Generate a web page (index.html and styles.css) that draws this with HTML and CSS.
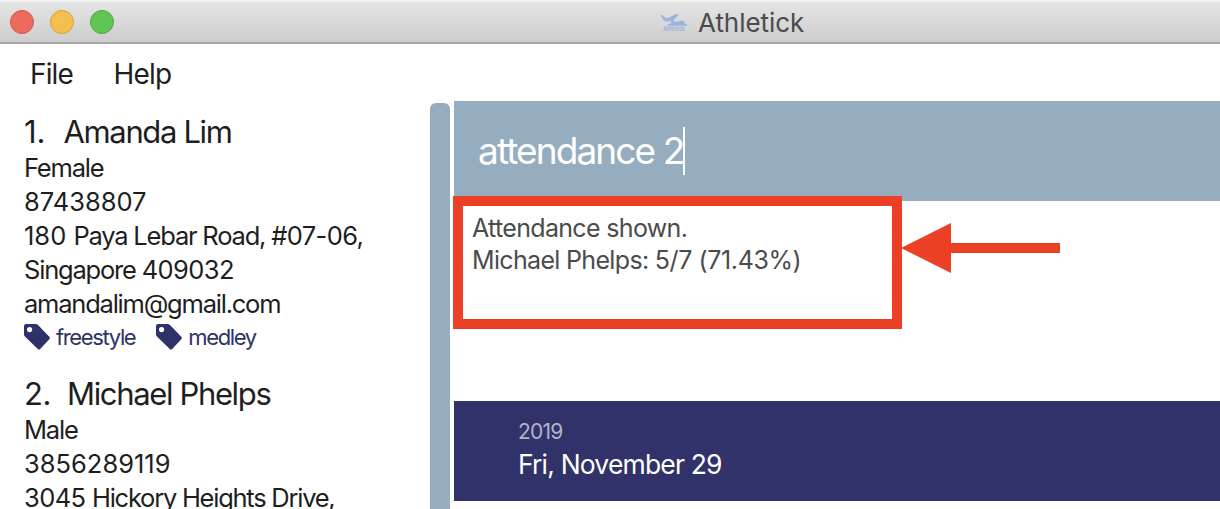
FILE: index.html
```html
<!DOCTYPE html>
<html lang="en">
<head>
<meta charset="utf-8">
<title>Athletick</title>
<link rel="stylesheet" href="styles.css">
</head>
<body>
<svg class="symbols" aria-hidden="true">
  <symbol id="tag" viewBox="0 0 26 26">
    <path fill-rule="evenodd" d="M0 2Q0 0 2 0H11.500Q13 0 14 1L25.300 12.800Q26.400 14 25.300 15.200L16.200 25Q15 26.200 13.800 25L.9 12.600Q0 11.700 0 10.500ZM5.600 3a2.600 2.600 0 1 0 0 5.200a2.600 2.600 0 0 0 0-5.200Z"/>
  </symbol>
</svg>
<div class="window">
  <header class="titlebar">
    <div class="lights"><i class="light close"></i><i class="light minimize"></i><i class="light zoom"></i></div>
    <div class="brand">
      <svg class="logo" viewBox="0 0 28 18">
        <path d="M.3 1.200L2 .8L4 2.800L7.500 4.300L15.500.2Q18.800-.4 18.300 1.600L13.300 6.200L15.500 8L20 7Q22.500 5.800 24.300 7.500L24.800 9.700L27.600 11L27 11.800H7.500L7.800 10.300L11.500 9.200L10.500 6.500L7 7.800L3.300 6Z"/>
        <text x="3" y="17.200" textLength="22" lengthAdjust="spacingAndGlyphs">Athletick</text>
      </svg>
      <h1 class="title">Athletick</h1>
    </div>
  </header>
  <nav class="menu"><span class="file">File</span><span class="help">Help</span></nav>
  <main class="content">
    <section class="people">
      <article class="person">
        <h2 class="name"><span class="index one">1.</span><span class="fullname">Amanda Lim</span></h2>
        <p class="line">Female</p>
        <p class="line digits">87438807</p>
        <p class="line"><span class="digits">180 </span>Paya Lebar Road, <span class="unit">#07-06,</span></p>
        <p class="line">Singapore <span class="unit">409032</span></p>
        <p class="line email">amandalim@gmail.com</p>
        <div class="tags">
          <span class="tag"><svg class="tag-icon"><use href="#tag"/></svg>freestyle</span>
          <span class="tag"><svg class="tag-icon"><use href="#tag"/></svg>medley</span>
        </div>
      </article>
      <article class="person">
        <h2 class="name"><span class="index two">2.</span><span class="fullname">Michael Phelps</span></h2>
        <p class="line">Male</p>
        <p class="line digits">3856289119</p>
        <p class="line street"><span class="unit">3045 </span>Hickory Heights Drive,</p>
      </article>
    </section>
    <div class="scrollbar"></div>
    <section class="panel">
      <div class="command"><span class="command-text">attendance 2</span><i class="caret"></i></div>
      <div class="result">
        <p>Attendance shown.</p>
        <p>Michael Phelps: <span class="score">5/7 (71.43%)</span></p>
        <div class="callout"></div>
        <svg class="arrow" viewBox="0 0 159 50"><path d="M0 25L50 0V20H159V30H50V50Z"/></svg>
      </div>
      <div class="date"><p class="year">2019</p><p class="day">Fri, November 29</p></div>
    </section>
  </main>
</div>
</body>
</html>
```
FILE: styles.css
```css
* { box-sizing: border-box; margin: 0; padding: 0; }
body { background: #fff; color: #1e1e1e; font-family: Inter, "Liberation Sans", sans-serif; overflow: hidden; }
.symbols { display: none; }
.window { height: 509px; display: flex; flex-direction: column; overflow: hidden; }

.titlebar { height: 44px; flex: none; display: grid; grid-template-columns: 650px 1fr; align-items: center; background: linear-gradient(#f5f5f5 0, #e4e4e4 3px, #cdcdcd 42px); border-bottom: 2px solid #a6a6a6; }
.lights { display: flex; gap: 16px; padding: 2px 0 0 10px; }
.light { width: 24px; height: 24px; border-radius: 50%; border: 1px solid; }
.close { background: #ed6a5e; border-color: #d5524a; }
.minimize { background: #f5bf4f; border-color: #d9a13c; }
.zoom { background: #61c554; border-color: #4fa73e; }
.brand { display: flex; align-items: center; padding: 4px 0 0 10px; gap: 10px; }
.logo { width: 28px; height: 18px; fill: #9db4db; overflow: visible; }
.logo text { font-size: 5.500px; font-weight: 700; }
.title { font-size: 26px; line-height: 32px; font-weight: 400; color: #4b4b4b; letter-spacing: -.05px; }

.menu { height: 57px; flex: none; display: flex; align-items: center; padding: 2px 0 0 30px; gap: 40.500px; font-size: 28px; letter-spacing: -.850px; }
.content { flex: 1; min-height: 0; display: grid; grid-template-columns: 430px 20px 1fr; }
.people { padding: 14px 0 0 24px; overflow: hidden; white-space: nowrap; }
.person { height: 262px; }
.name { display: flex; height: 36px; line-height: 34px; font-size: 31px; font-weight: 400; }
.index { width: 39.500px; }
.two { width: 43px; letter-spacing: -.5px; }
.fullname { letter-spacing: -1.350px; }
.line { height: 34px; line-height: 34px; font-size: 25.500px; letter-spacing: -1.200px; white-space: pre; }
.digits { letter-spacing: 0; }
.unit { letter-spacing: -.600px; }
.email { letter-spacing: -1.220px; }
.street { letter-spacing: -1.250px; }
.tags { display: flex; gap: 21px; padding-top: 1px; }
.tag { display: flex; align-items: center; gap: 6px; height: 30px; font-size: 22px; letter-spacing: -1.360px; color: #2f3268; }
.tag-icon { width: 26px; height: 26px; fill: #2f3268; }
.scrollbar { margin-top: 2px; background: #96adc0; border-radius: 6px 6px 0 0; }

.panel { margin-left: 4px; white-space: nowrap; }
.command { height: 100px; display: flex; align-items: center; padding-left: 24px; background: #96adc0; color: #fff; font-size: 37px; letter-spacing: -1.900px; }
.command-text { padding-bottom: 2px; }
.caret { width: 2px; height: 48px; background: #fff; }
.result { position: relative; height: 200px; padding: 11px 0 0 18px; font-size: 25px; line-height: 32px; letter-spacing: -.670px; color: #4b4b4b; }
.score { letter-spacing: -.400px; }
.callout { position: absolute; left: -1px; top: -5px; width: 449px; height: 133px; border: 10px solid #eb4026; }
.arrow { position: absolute; left: 447px; top: 22px; width: 159px; height: 50px; fill: #eb4026; }
.date { height: 100px; padding: 19px 0 0 64px; background: #303269; color: #fff; }
.year { height: 23px; line-height: 24px; font-size: 21px; letter-spacing: -.800px; color: #b2b2c8; }
.day { height: 40px; line-height: 42px; font-size: 26.500px; letter-spacing: -.820px; }
```
